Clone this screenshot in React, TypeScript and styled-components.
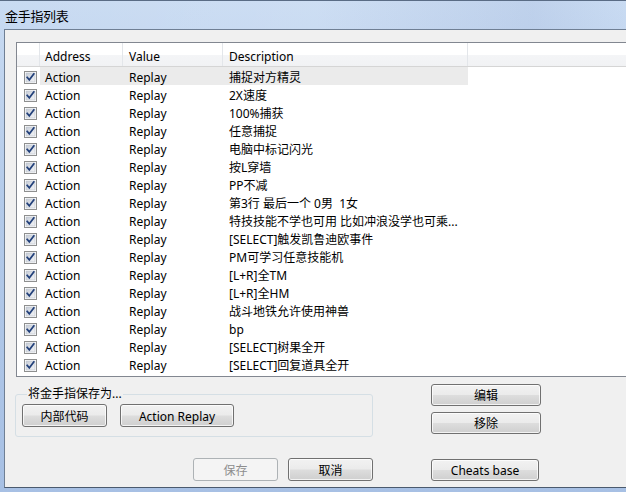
import React from "react";
import styled, { createGlobalStyle } from "styled-components";

const Global = createGlobalStyle`
  html, body { margin: 0; padding: 0; }
  body {
    width: 626px;
    height: 492px;
    overflow: hidden;
    font-family: "Noto Sans", "Noto Sans CJK SC", sans-serif;
    font-size: 12px;
    color: #000;
  }
`;

const Frame = styled.div`
  width: 626px;
  height: 492px;
  box-sizing: border-box;
  display: flex;
  flex-direction: column;
  background: linear-gradient(180deg, #c9dbf2 0%, #b4cbea 40%, #a7c0e4 100%);
  border-top: 1px solid #5a6c85;
  padding-left: 4px;
  padding-bottom: 4px;
  overflow: hidden;
`;

const TitleBar = styled.div`
  height: 28px;
  flex: none;
  display: flex;
  align-items: center;
  padding-left: 1px;
  font-size: 13px;
  letter-spacing: -0.3px;
  background: linear-gradient(90deg, rgba(255,255,255,0) 0%, rgba(255,255,255,0.08) 50%, rgba(120,140,190,0.12) 85%, rgba(255,255,255,0) 100%);
`;

const Client = styled.div`
  flex: 1;
  display: flex;
  flex-direction: column;
  background: #f0f0f0;
  border-top: 1px solid #6f7f94;
  border-left: 1px solid #6f7f94;
  border-bottom: 1px solid #4b5a6e;
  padding: 12px 0 0 11px;
  overflow: hidden;
`;

const ListBox = styled.div`
  width: 640px;
  flex: none;
  border: 1px solid #828790;
  border-right: none;
  background: #fff;
  padding-bottom: 3px;
`;

const Cols = styled.div`
  display: grid;
  grid-template-columns: 23px 83px 100px 245px 1fr;
`;

const HeaderRow = styled(Cols)`
  height: 23px;
  background: linear-gradient(180deg, #ffffff 0%, #ffffff 50%, #f4f5f7 52%, #f1f2f4 100%);
  border-bottom: 1px solid #d5d5d5;
`;

const HeadCell = styled.div<{ $pad?: number }>`
  display: flex;
  align-items: center;
  box-sizing: border-box;
  padding-left: ${(p) => p.$pad ?? 6}px;
  padding-top: 3px;
  border-right: 1px solid #e3e6ea;
  white-space: nowrap;
  &:last-child { border-right: none; }
`;

const Row = styled(Cols)`
  height: 18px;
`;

const Cell = styled.div<{ $pad?: number; $hl?: boolean }>`
  display: flex;
  align-items: center;
  box-sizing: border-box;
  height: 18px;
  padding-left: ${(p) => p.$pad ?? 6}px;
  padding-top: 4px;
  white-space: pre;
  overflow: hidden;
  line-height: 14px;
  background: ${(p) => (p.$hl ? "#ebebeb" : "transparent")};
`;

const CheckCell = styled.div`
  display: flex;
  align-items: center;
  padding-left: 7px;
  padding-top: 2px;
`;

const Bottom = styled.div`
  display: flex;
  align-items: flex-start;
  margin-left: -1px;
`;

const LeftCol = styled.div`
  width: 358px;
  display: flex;
  flex-direction: column;
`;

const Group = styled.fieldset`
  margin: 10px 0 0 0;
  width: 358px;
  box-sizing: border-box;
  border: 1px solid #d5dfe5;
  border-radius: 3px;
  padding: 3px 6px 9px 6px;
  display: flex;
  gap: 13px;
`;

const Legend = styled.legend`
  padding: 0 1px;
  margin-left: 5px;
  line-height: 14px;
  font-size: 12px;
`;

const DialogRow = styled.div`
  display: flex;
  justify-content: flex-end;
  gap: 10px;
  margin-top: 21px;
`;

const RightCol = styled.div`
  margin-left: 58px;
  margin-top: 7px;
  display: flex;
  flex-direction: column;
`;

const Button = styled.button<{ $w: number; $h?: number; $mt?: number }>`
  width: ${(p) => p.$w}px;
  height: ${(p) => p.$h ?? 23}px;
  margin-top: ${(p) => p.$mt ?? 0}px;
  box-sizing: border-box;
  border: 1px solid #707070;
  border-radius: 3px;
  font-family: "Noto Sans", "Noto Sans CJK SC", sans-serif;
  font-size: 12px;
  color: #000;
  padding: 2px 0 0 0;
  line-height: 1;
  box-shadow: inset 0 0 0 1px rgba(255, 255, 255, 0.75);
  background: linear-gradient(180deg, #f2f2f2 0%, #ebebeb 48%, #dddddd 52%, #cfcfcf 100%);
  &:disabled {
    color: #8d8d8d;
    border-color: #adb2b5;
    background: #f4f4f4;
    box-shadow: none;
  }
`;

const Check = () => (
  <svg width="13" height="13" viewBox="0 0 13 13">
    <defs>
      <linearGradient id="cbg" x1="0" y1="0" x2="1" y2="1">
        <stop offset="0" stopColor="#c6ccd6" />
        <stop offset="1" stopColor="#f4f5f7" />
      </linearGradient>
    </defs>
    <rect x="0.5" y="0.5" width="12" height="12" fill="#fff" stroke="#8e8f8f" />
    <rect x="2" y="2" width="9" height="9" fill="url(#cbg)" stroke="#b9c0ca" strokeWidth="0.6" />
    <path d="M3.2 6.4 L5.3 8.8 L9.8 3" fill="none" stroke="#22407a" strokeWidth="1.7" strokeLinecap="square" />
  </svg>
);

const descriptions = [
  "捕捉对方精灵",
  "2X速度",
  "100%捕获",
  "任意捕捉",
  "电脑中标记闪光",
  "按L穿墙",
  "PP不减",
  "第3行 最后一个 0男  1女",
  "特技技能不学也可用 比如冲浪没学也可乘...",
  "[SELECT]触发凯鲁迪欧事件",
  "PM可学习任意技能机",
  "[L+R]全TM",
  "[L+R]全HM",
  "战斗地铁允许使用神兽",
  "bp",
  "[SELECT]树果全开",
  "[SELECT]回复道具全开",
];

export default function App() {
  return (
    <>
      <Global />
      <Frame>
        <TitleBar>金手指列表</TitleBar>
        <Client>
          <ListBox>
            <HeaderRow>
              <HeadCell />
              <HeadCell $pad={5}>Address</HeadCell>
              <HeadCell>Value</HeadCell>
              <HeadCell>Description</HeadCell>
              <HeadCell />
            </HeaderRow>
            {descriptions.map((d, i) => (
              <Row key={i}>
                <CheckCell>
                  <Check />
                </CheckCell>
                <Cell $pad={5} $hl={i === 0}>Action</Cell>
                <Cell $hl={i === 0}>Replay</Cell>
                <Cell $hl={i === 0}>{d}</Cell>
                <Cell />
              </Row>
            ))}
          </ListBox>
          <Bottom>
            <LeftCol>
              <Group>
                <Legend>将金手指保存为...</Legend>
                <Button $w={85}>内部代码</Button>
                <Button $w={114}>Action Replay</Button>
              </Group>
              <DialogRow>
                <Button $w={85} disabled>保存</Button>
                <Button $w={85}>取消</Button>
              </DialogRow>
            </LeftCol>
            <RightCol>
              <Button $w={110} $h={22}>编辑</Button>
              <Button $w={110} $h={22} $mt={6}>移除</Button>
              <Button $w={108} $h={22} $mt={25}>Cheats base</Button>
            </RightCol>
          </Bottom>
        </Client>
      </Frame>
    </>
  );
}
